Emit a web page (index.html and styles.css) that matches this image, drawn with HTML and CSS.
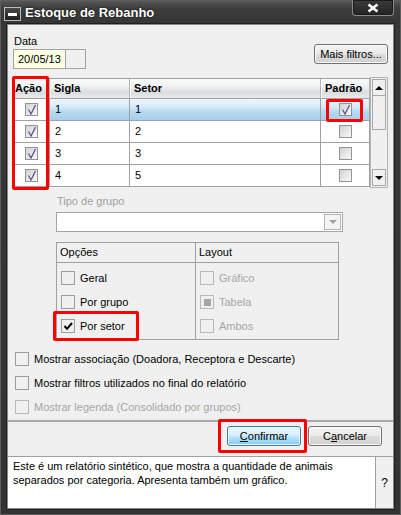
FILE: index.html
```html
<!DOCTYPE html>
<html lang="pt-BR">
<head>
    <meta charset="UTF-8">
    <title>Estoque de Rebanho</title>
    <link rel="stylesheet" href="styles.css">
</head>
<body>
    <div class="janela">
        <div class="barra-titulo">
            <span class="icone-janela"><span></span></span>
            <span class="titulo">Estoque de Rebanho</span>
            <span class="fechar">
                <svg width="14" height="10" viewBox="0 0 14 10"><path d="M2.5 1.5 L11.5 8.5 M11.5 1.5 L2.5 8.5" stroke="#fff" stroke-width="2.6" fill="none"/></svg>
            </span>
        </div>

        <div class="cliente">
            <div class="topo">
                <div class="data">
                    <label>Data</label>
                    <div class="data-campos">
                        <span class="campo-data">20/05/13</span>
                        <span class="campo-extra"></span>
                    </div>
                </div>
                <button class="botao">Mais filtros...</button>
            </div>

            <div class="grade-area">
                <div class="grade">
                    <div class="cab cab-acao">Ação</div>
                    <div class="cab">Sigla</div>
                    <div class="cab">Setor</div>
                    <div class="cab">Padrão</div>

                    <div class="cel cel-check"><span class="cb-grade"><svg width="11" height="11" viewBox="0 0 11 11"><path d="M2.5 5.5 L5 10 L9.5 1" stroke="#55559a" stroke-width="1.3" fill="none"/></svg></span></div>
                    <div class="cel sel">1</div>
                    <div class="cel sel">1</div>
                    <div class="cel cel-check sel"><span class="cb-grade"><svg width="11" height="11" viewBox="0 0 11 11"><path d="M2.5 5.5 L5 10 L9.5 1" stroke="#55559a" stroke-width="1.3" fill="none"/></svg></span></div>

                    <div class="cel cel-check"><span class="cb-grade"><svg width="11" height="11" viewBox="0 0 11 11"><path d="M2.5 5.5 L5 10 L9.5 1" stroke="#55559a" stroke-width="1.3" fill="none"/></svg></span></div>
                    <div class="cel">2</div>
                    <div class="cel">2</div>
                    <div class="cel cel-check"><span class="cb-grade"></span></div>

                    <div class="cel cel-check"><span class="cb-grade"><svg width="11" height="11" viewBox="0 0 11 11"><path d="M2.5 5.5 L5 10 L9.5 1" stroke="#55559a" stroke-width="1.3" fill="none"/></svg></span></div>
                    <div class="cel">3</div>
                    <div class="cel">3</div>
                    <div class="cel cel-check"><span class="cb-grade"></span></div>

                    <div class="cel cel-check"><span class="cb-grade"><svg width="11" height="11" viewBox="0 0 11 11"><path d="M2.5 5.5 L5 10 L9.5 1" stroke="#55559a" stroke-width="1.3" fill="none"/></svg></span></div>
                    <div class="cel">4</div>
                    <div class="cel">5</div>
                    <div class="cel cel-check"><span class="cb-grade"></span></div>
                </div>
                <div class="rolagem">
                    <div class="rol-btn"><span class="seta-cima"></span></div>
                    <div class="rol-polegar"></div>
                    <div class="rol-espaco"></div>
                    <div class="rol-btn"><span class="seta-baixo"></span></div>
                </div>
            </div>

            <div class="tipo-grupo">
                <label>Tipo de grupo</label>
                <div class="combo">
                    <span class="combo-btn"><span class="seta-combo"></span></span>
                </div>
            </div>

            <div class="opcoes">
                <div class="op-col">
                    <div class="op-cab">Opções</div>
                    <div class="op-lista">
                        <div class="op-item"><span class="cb"></span>Geral</div>
                        <div class="op-item"><span class="cb"></span>Por grupo</div>
                        <div class="op-item"><span class="cb"><svg width="12" height="12" viewBox="0 0 12 12"><path d="M2.5 6 L5 8.8 L10 3" stroke="#000" stroke-width="2" fill="none"/></svg></span>Por setor</div>
                    </div>
                </div>
                <div class="op-col desativado">
                    <div class="op-cab">Layout</div>
                    <div class="op-lista">
                        <div class="op-item"><span class="cb"></span>Gráfico</div>
                        <div class="op-item"><span class="cb"><span class="quadrado"></span></span>Tabela</div>
                        <div class="op-item"><span class="cb"></span>Ambos</div>
                    </div>
                </div>
            </div>

            <div class="extras">
                <div class="op-item"><span class="cb"></span>Mostrar associação (Doadora, Receptora e Descarte)</div>
                <div class="op-item"><span class="cb"></span>Mostrar filtros utilizados no final do relatório</div>
                <div class="op-item desativado"><span class="cb"></span>Mostrar legenda (Consolidado por grupos)</div>
            </div>

            <div class="separador"></div>

            <div class="botoes">
                <button class="botao botao-padrao"><u>C</u>onfirmar</button>
                <button class="botao">C<u>a</u>ncelar</button>
            </div>

            <div class="descricao">
                <div class="desc-texto">Este é um relatório sintético, que mostra a quantidade de animais separados por categoria. Apresenta também um gráfico.</div>
                <div class="desc-ajuda">?</div>
            </div>

            <!-- marcações vermelhas da captura -->
            <div class="marca marca-acao"></div>
            <div class="marca marca-padrao"></div>
            <div class="marca marca-setor"></div>
            <div class="marca marca-confirmar"></div>
        </div>
    </div>
</body>
</html>
```

FILE: styles.css
```css
* {
    box-sizing: border-box;
}
body {
    margin: 0;
    background-color: #2e2e2e;
    font-family: 'Liberation Sans', Arial, sans-serif;
    font-size: 11px;
    color: #000;
}
button {
    font: inherit;
    color: inherit;
    padding: 0;
    margin: 0;
}
.janela {
    width: 401px;
    height: 515px;
    display: flex;
    flex-direction: column;
    background: linear-gradient(#4a4a4a, #383838 24px, #333);
    border: 1px solid #5e5e5e;
}
.barra-titulo {
    height: 23px;
    display: flex;
    align-items: flex-start;
    padding-left: 3px;
    background: linear-gradient(#575757, #3e3e3e 7px, #353535);
}
.icone-janela {
    width: 17px;
    height: 14px;
    margin-top: 6px;
    border: 1px solid #bcbcbc;
    background: linear-gradient(#4a4a4a, #1f1f1f);
    display: flex;
    align-items: center;
    justify-content: center;
}
.icone-janela span {
    width: 9px;
    height: 3px;
    background-color: #fff;
}
.titulo {
    margin-left: 4px;
    margin-top: 4px;
    font-size: 13px;
    line-height: 16px;
    font-weight: bold;
    color: #fff;
    text-shadow: 0 0 2px #000;
}
.fechar {
    margin-left: auto;
    margin-right: 6px;
    margin-top: -1px;
    width: 42px;
    height: 16px;
    border: 1px solid #8c8c8c;
    border-top: none;
    border-radius: 0 0 4px 4px;
    background: linear-gradient(#3c3c3c, #222);
    box-shadow: inset 0 0 0 1px #1a1a1a;
    display: flex;
    align-items: center;
    justify-content: center;
}
.cliente {
    position: relative;
    flex: 1;
    margin: 0 6px 5px;
    padding: 0 5px;
    display: flex;
    flex-direction: column;
    background-color: #f0f0f0;
    border: 1px solid #8a8a8a;
    box-shadow: 0 0 0 1px #1e1e1e;
}

/* topo: data e filtros */
.topo {
    display: flex;
    justify-content: space-between;
    align-items: flex-start;
    padding-top: 10px;
}
.data label {
    display: block;
    line-height: 13px;
    padding-left: 1px;
}
.data-campos {
    display: flex;
    margin-top: 1px;
}
.campo-data {
    width: 53px;
    height: 20px;
    line-height: 18px;
    padding-left: 4px;
    background-color: #ffffe4;
    border: 1px solid #a3a3a3;
}
.campo-extra {
    width: 20px;
    height: 20px;
    border: 1px solid #a3a3a3;
    border-left: none;
}
.botao {
    width: 74px;
    height: 20px;
    border: 1px solid #707070;
    border-radius: 3px;
    background: linear-gradient(#f3f3f3, #ebebeb 48%, #dddddd 52%, #cfcfcf);
    box-shadow: inset 0 0 0 1px #fbfbfb;
    text-align: center;
    line-height: 17px;
}
.topo .botao {
    margin-top: 9px;
}

/* grade */
.grade-area {
    display: flex;
    margin-top: 9px;
}
.grade {
    width: 357px;
    display: grid;
    grid-template-columns: 36px 80px 191px 49px;
    grid-template-rows: 20px repeat(4, 22px);
    border-left: 1px solid #a0a0a0;
    border-top: 1px solid #a0a0a0;
    background-color: #fff;
}
.cab {
    font-weight: bold;
    line-height: 19px;
    padding-left: 4px;
    border-right: 1px solid #b4b4b4;
    border-bottom: 1px solid #a0a0a0;
    background: linear-gradient(#fbfbfb, #f1f2f3 35%, #dadde0 70%, #e9ebed);
    box-shadow: inset 1px 0 #fff;
}
.cab-acao {
    padding-left: 1px;
}
.cel {
    line-height: 21px;
    padding-left: 5px;
    border-right: 1px solid #a0a0a0;
    border-bottom: 1px solid #a0a0a0;
}
.cel-check {
    padding: 0;
    display: flex;
    align-items: center;
    justify-content: center;
}
.sel {
    background: linear-gradient(#eef7fd, #d6eaf8 40%, #b5d9f1 60%, #a6cfec);
}
.cb-grade {
    width: 13px;
    height: 13px;
    border: 1px solid #949494;
    background: linear-gradient(135deg, #d2d2d2, #f9f9f9);
    display: flex;
    align-items: center;
    justify-content: center;
}
.rolagem {
    width: 21px;
    margin: -1px 0 -1px 0;
    padding: 1px;
    border: 1px solid #b2b2b2;
    background-color: #f0f0f0;
    display: flex;
    flex-direction: column;
}
.rol-btn {
    height: 17px;
    border: 1px solid #a8a8a8;
    display: flex;
    align-items: center;
    justify-content: center;
}
.rol-polegar {
    height: 34px;
    border: 1px solid #a8a8a8;
    border-top: none;
}
.rol-espaco {
    flex: 1;
}
.seta-cima {
    border-left: 4px solid transparent;
    border-right: 4px solid transparent;
    border-bottom: 4px solid #000;
}
.seta-baixo {
    border-left: 4px solid transparent;
    border-right: 4px solid transparent;
    border-top: 4px solid #000;
}

/* tipo de grupo */
.tipo-grupo {
    margin-left: 43px;
    margin-top: 8px;
}
.tipo-grupo label {
    display: block;
    line-height: 13px;
    padding-left: 1px;
    color: #a0a0a0;
}
.combo {
    width: 287px;
    height: 20px;
    margin-top: 4px;
    border: 1px solid #a5a5a5;
    background-color: #fff;
    display: flex;
    justify-content: flex-end;
    padding: 1px;
}
.combo-btn {
    width: 17px;
    border: 1px solid #b3b3b3;
    background-color: #f4f4f4;
    display: flex;
    align-items: center;
    justify-content: center;
}
.seta-combo {
    border-left: 4px solid transparent;
    border-right: 4px solid transparent;
    border-top: 4px solid #a0a0a0;
}

/* opções */
.opcoes {
    width: 283px;
    height: 98px;
    margin: 10px 0 0 43px;
    display: grid;
    grid-template-columns: 139px 1fr;
    border: 1px solid #a0a0a0;
}
.op-col:first-child {
    border-right: 1px solid #a0a0a0;
}
.op-cab {
    height: 20px;
    line-height: 19px;
    padding-left: 3px;
    border-bottom: 1px solid #a0a0a0;
}
.desativado .op-cab {
    color: #000;
}
.op-lista {
    display: flex;
    flex-direction: column;
    gap: 10px;
    padding: 8px 0 0 4px;
}
.op-item {
    display: flex;
    align-items: center;
    height: 14px;
    line-height: 13px;
}
.cb {
    width: 14px;
    height: 14px;
    margin-right: 5px;
    border: 1px solid #9c9c9c;
    display: flex;
    align-items: center;
    justify-content: center;
}
.desativado .op-lista .op-item,
.op-item.desativado {
    color: #a6a6a6;
}
.desativado .cb,
.op-item.desativado .cb {
    border-color: #b9b9b9;
}
.quadrado {
    width: 7px;
    height: 7px;
    background-color: #a6a6a6;
}

/* opções extras */
.extras {
    display: flex;
    flex-direction: column;
    gap: 10px;
    margin: 12px 0 0 2px;
}

.separador {
    height: 2px;
    margin: 6px -5px 0;
    background-color: #a9a9a9;
}
.botoes {
    display: flex;
    justify-content: flex-end;
    gap: 7px;
    margin-top: 4px;
    padding-right: 6px;
}
.botao-padrao {
    border-color: #3c7fb1;
    background: linear-gradient(#eaf6fd, #d9f0fc 45%, #bee6fd 52%, #86c9ee);
    box-shadow: inset 0 0 0 1px #e6f4fc;
}
.descricao {
    height: 52px;
    margin: auto -5px 0;
    display: flex;
    border-top: 1px solid #a0a0a0;
}
.desc-texto {
    flex: 1;
    background-color: #fff;
    padding: 2px 5px;
    line-height: 14px;
    border-right: 1px solid #a0a0a0;
}
.desc-ajuda {
    width: 17px;
    display: flex;
    align-items: center;
    justify-content: center;
    font-size: 12px;
}

/* marcações vermelhas */
.marca {
    position: absolute;
    border: 3px solid #f00;
    border-radius: 2px;
}
.marca-acao {
    left: 4px;
    top: 51px;
    width: 37px;
    height: 114px;
}
.marca-padrao {
    left: 318px;
    top: 74px;
    width: 37px;
    height: 23px;
}
.marca-setor {
    left: 45px;
    top: 286px;
    width: 86px;
    height: 30px;
}
.marca-confirmar {
    left: 210px;
    top: 394px;
    width: 89px;
    height: 34px;
}
```
